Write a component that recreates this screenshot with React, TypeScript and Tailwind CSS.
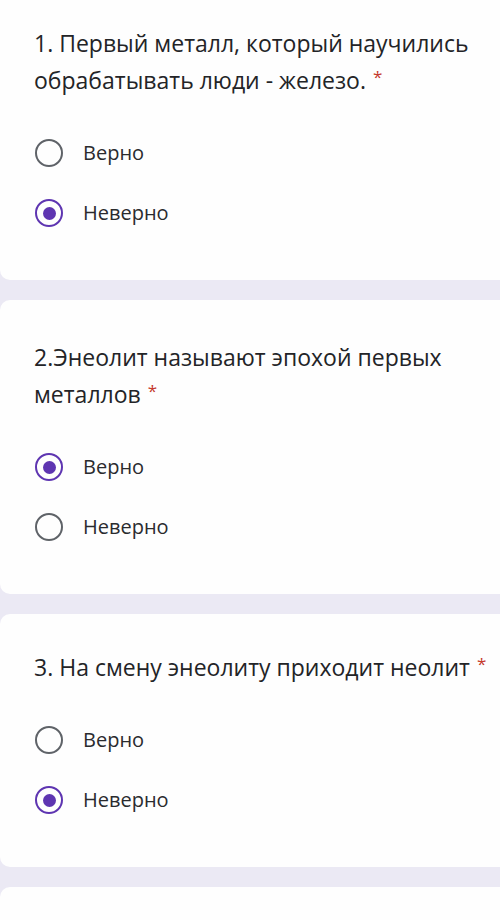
import React from "react";

type Question = {
  text: string;
  answer: "Верно" | "Неверно";
  pt: string;
  first?: boolean;
  nowrap?: boolean;
};

const questions: Question[] = [
  { text: "1. Первый металл, который научились обрабатывать люди - железо.", answer: "Неверно", pt: "pt-[25px]", first: true },
  { text: "2.Энеолит называют эпохой первых металлов", answer: "Верно", pt: "pt-[39px]" },
  { text: "3. На смену энеолиту приходит неолит", answer: "Неверно", pt: "pt-[35px]", nowrap: true },
];

function Radio({ checked }: { checked: boolean }) {
  if (checked) {
    return (
      <span className="w-[28px] h-[28px] rounded-full border-[2.5px] border-[#5e35b1] flex items-center justify-center shrink-0">
        <span className="w-[13px] h-[13px] rounded-full bg-[#5e35b1]" />
      </span>
    );
  }
  return <span className="w-[28px] h-[28px] rounded-full border-[2.5px] border-[#5f6368] shrink-0" />;
}

export default function App() {
  return (
    <div
      className="w-[500px] min-h-[920px] bg-[#ebe9f4] overflow-hidden flex flex-col gap-[20px]"
      style={{ fontFamily: "'Open Sans', Roboto, sans-serif" }}
    >
      {questions.map((q) => (
        <div
          key={q.text}
          className={`bg-[#fefefe] w-[520px] pl-[34px] pb-[37px] ${q.pt} ${q.first ? "rounded-bl-[10px]" : "rounded-l-[10px]"}`}
        >
          <div className={`text-[23px] leading-[37px] text-[#232427] pr-[40px] ${q.nowrap ? "whitespace-nowrap" : ""}`}>
            {q.text}
            <span className="relative -top-[6px] text-[#c5392c] text-[17px] leading-none ml-[7px]">*</span>
          </div>
          <div className="mt-[24px] flex flex-col">
            {(["Верно", "Неверно"] as const).map((opt) => (
              <div key={opt} className="h-[60px] flex items-center gap-[20px] pl-[1px]">
                <Radio checked={opt === q.answer} />
                <span className="text-[20px] text-[#2a2b2e]">{opt}</span>
              </div>
            ))}
          </div>
        </div>
      ))}
      <div className="bg-[#fefefe] w-[520px] h-[40px] rounded-tl-[10px]" />
    </div>
  );
}
